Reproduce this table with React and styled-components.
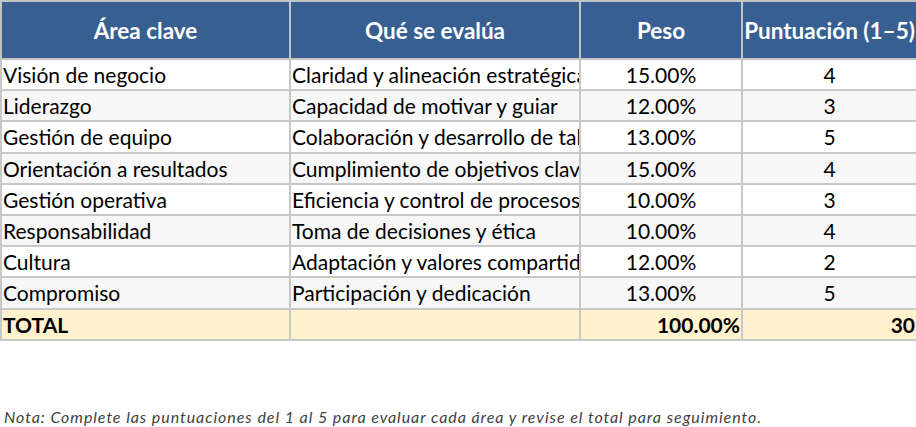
import React from 'react'
import styled, { createGlobalStyle } from 'styled-components'

const GlobalStyle = createGlobalStyle`
  html, body {
    margin: 0;
    padding: 0;
    background: #ffffff;
  }
  body {
    font-family: Lato, Carlito, "Liberation Sans", sans-serif;
    color: #000;
  }
`

const Page = styled.div`
  width: 916px;
  height: 427px;
  display: flex;
  flex-direction: column;
  overflow: hidden;
`

const Table = styled.table`
  border-collapse: collapse;
  table-layout: fixed;
  width: 916px;
`

const HeadCell = styled.th`
  height: 56px;
  padding: 0;
  background: #375f92;
  color: #ffffff;
  font-weight: 700;
  font-size: 22.5px;
  text-align: center;
  border: 2px solid #c4c4c4;
  white-space: nowrap;
  overflow: hidden;
`

const Row = styled.tr`
  background: ${p => (p.$total ? '#fff2cc' : p.$alt ? '#f7f7f7' : '#ffffff')};
  font-weight: ${p => (p.$total ? 700 : 400)};
`

const Cell = styled.td`
  height: 29.2px;
  padding: 0 ${p => (p.$align === 'right' ? '1px' : '1px')};
  font-size: 21px;
  line-height: 1;
  text-align: ${p => p.$align || 'left'};
  border: 2px solid #c8c8c8;
  white-space: nowrap;
  overflow: hidden;
`

const Note = styled.p`
  margin: 66px 0 0 4px;
  font-size: 16px;
  letter-spacing: 0.95px;
  font-style: italic;
  color: #3f3f3f;
`

const rows = [
  ['Visión de negocio', 'Claridad y alineación estratégica', '15.00%', 4],
  ['Liderazgo', 'Capacidad de motivar y guiar', '12.00%', 3],
  ['Gestión de equipo', 'Colaboración y desarrollo de talento', '13.00%', 5],
  ['Orientación a resultados', 'Cumplimiento de objetivos clave', '15.00%', 4],
  ['Gestión operativa', 'Eficiencia y control de procesos', '10.00%', 3],
  ['Responsabilidad', 'Toma de decisiones y ética', '10.00%', 4],
  ['Cultura', 'Adaptación y valores compartidos', '12.00%', 2],
  ['Compromiso', 'Participación y dedicación', '13.00%', 5],
]

const App = () => {
  return (
    <Page>
      <GlobalStyle />
      <Table>
        <colgroup>
          <col style={{ width: 289 }} />
          <col style={{ width: 290 }} />
          <col style={{ width: 162 }} />
          <col style={{ width: 175 }} />
        </colgroup>
        <thead>
          <tr>
            <HeadCell>Área clave</HeadCell>
            <HeadCell>Qué se evalúa</HeadCell>
            <HeadCell>Peso</HeadCell>
            <HeadCell>Puntuación (1–5)</HeadCell>
          </tr>
        </thead>
        <tbody>
          {rows.map((r, i) => (
            <Row key={r[0]} $alt={i % 2 === 1}>
              <Cell>{r[0]}</Cell>
              <Cell>{r[1]}</Cell>
              <Cell $align="center">{r[2]}</Cell>
              <Cell $align="center">{r[3]}</Cell>
            </Row>
          ))}
          <Row $total>
            <Cell>TOTAL</Cell>
            <Cell />
            <Cell $align="right">100.00%</Cell>
            <Cell $align="right">30</Cell>
          </Row>
        </tbody>
      </Table>
      <Note>
        Nota: Complete las puntuaciones del 1 al 5 para evaluar cada área y revise el total para seguimiento.
      </Note>
    </Page>
  )
}

export default App
